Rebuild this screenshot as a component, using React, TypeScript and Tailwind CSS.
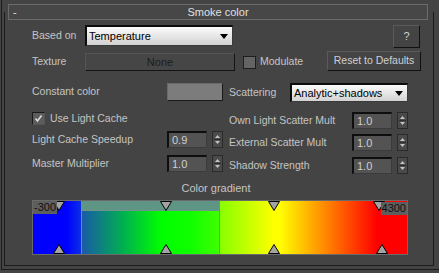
import React from "react";

const font = "font-['Liberation_Sans',Arial,sans-serif]";

function Arrow() {
  return (
    <svg width="8" height="5" viewBox="0 0 8 5">
      <polygon points="0,0 8,0 4,5" fill="#000" />
    </svg>
  );
}

function Dropdown({ text, className }: { text: string; className: string }) {
  return (
    <div
      className={`flex items-center border-t-2 border-l-2 border-t-[#0c0c0c] border-l-[#0c0c0c] border-r border-b border-r-[#3a3a3a] border-b-[#3a3a3a] bg-gradient-to-b from-[#fbfbfb] to-[#d2d2d2] pl-[2px] pr-[4px] text-[11px] text-black ${className}`}
    >
      <span className="flex-1 truncate">{text}</span>
      <Arrow />
    </div>
  );
}

function Spinner() {
  return (
    <div className="ml-[5px] h-[17px] w-[11px] border border-[#2a2a2a] bg-[#4a4a4a]">
      <svg width="9" height="15" viewBox="0 0 9 15">
        <polygon points="4.5,3 7,6 2,6" fill="#c4c4c4" />
        <line x1="1" y1="7.5" x2="8" y2="7.5" stroke="#2e2e2e" />
        <polygon points="2,9 7,9 4.5,12" fill="#c4c4c4" />
      </svg>
    </div>
  );
}

function NumField({ value }: { value: string }) {
  return (
    <div className="flex items-center">
      <div className="flex h-[17px] w-[40px] items-center border-t-2 border-l-2 border-t-[#0e0e0e] border-l-[#0e0e0e] border-r border-b border-r-[#3b3b3b] border-b-[#3b3b3b] bg-[#535353] pl-[3px] text-[11px] text-[#cfcfcf]">
        {value}
      </div>
      <Spinner />
    </div>
  );
}

function TopMarker({ left }: { left: string }) {
  return (
    <svg className={`absolute top-0 ${left}`} width="12" height="10" viewBox="0 0 12 10">
      <polygon points="0.5,0.5 11.5,0.5 6,9.5" fill="#a3a3a3" stroke="#000" strokeWidth="1" />
    </svg>
  );
}

function BottomMarker({ left }: { left: string }) {
  return (
    <svg className={`absolute bottom-0 ${left}`} width="12" height="10" viewBox="0 0 12 10">
      <polygon points="6,0.5 11.5,9.5 0.5,9.5" fill="#a3a3a3" stroke="#000" strokeWidth="1" />
    </svg>
  );
}

export default function App() {
  return (
    <div className={`h-[273px] w-[439px] overflow-hidden whitespace-nowrap bg-[#444444] pl-[1px] text-[10.5px] text-[#c4c4c4] ${font}`}>
      <div className="h-[270px] border-l border-b border-[#1c1c1c] pl-[2px] pt-[12px]">
        <div className="flex h-[254px] w-[430px] flex-col border-l border-r border-b border-[#1c1c1c]">
          {/* rollout header */}
          <div className="-mt-[8px] ml-[3px] grid h-[16px] w-[420px] grid-cols-[20px_1fr_20px] items-center border border-[#6b6b6b] bg-[#474747] text-[11px] text-[#e0e0e0]">
            <span className="pl-[4px] leading-none">-</span>
            <span className="text-center leading-none">Smoke color</span>
            <span />
          </div>

          {/* based on */}
          <div className="mt-[5px] flex items-start pl-[27px]">
            <span className="flex h-[21px] w-[53px] items-center">Based on</span>
            <Dropdown text="Temperature" className="h-[21px] w-[148px]" />
            <div className="ml-auto mr-[13px] flex h-[23px] w-[27px] items-center justify-center border border-t-[#5a5a5a] border-l-[#5a5a5a] border-r-[#111] border-b-[#111] text-[11px] text-[#d0d0d0]">
              ?
            </div>
          </div>

          {/* texture */}
          <div className="mt-[3px] flex items-start pl-[27px]">
            <span className="flex h-[20px] w-[53px] items-center pt-[1px]">Texture</span>
            <div className="mt-[2px] flex h-[18px] w-[150px] items-center justify-center border border-t-[#555] border-l-[#555] border-r-[#151515] border-b-[#151515] bg-[#464646] text-[11px] text-[#1c1c1c]">
              None
            </div>
            <div className="ml-[8px] mt-[5px] h-[13px] w-[13px] border border-[#1e1e1e] bg-[#646464]" />
            <span className="ml-[4px] flex h-[20px] items-center pt-[2px]">Modulate</span>
            <div className="ml-auto mr-[12px] flex h-[20px] w-[94px] items-center justify-center border border-t-[#5a5a5a] border-l-[#5a5a5a] border-r-[#111] border-b-[#111] text-[#d0d0d0]">
              Reset to Defaults
            </div>
          </div>

          {/* two columns */}
          <div className="mt-[12px] flex">
            <div className="ml-[27px] flex w-[192px] flex-col">
              <div className="flex h-[18px] items-center">
                <span className="w-[135px]">Constant color</span>
                <div className="h-[18px] w-[56px] border border-t-[#6a6a6a] border-l-[#6a6a6a] border-r-[#1a1a1a] border-b-[#1a1a1a] bg-[#7c7c7c]" />
              </div>
              <div className="mt-[11px] flex h-[13px] items-center">
                <div className="flex h-[13px] w-[13px] items-center justify-center border border-t-[#1a1a1a] border-l-[#1a1a1a] border-r-[#555] border-b-[#555] bg-[#5c5c5c]">
                  <svg width="9" height="9" viewBox="0 0 9 9">
                    <polyline points="1.5,4.5 3.5,7 7.5,1.5" fill="none" stroke="#dcdcdc" strokeWidth="1.6" />
                  </svg>
                </div>
                <span className="ml-[5px]">Use Light Cache</span>
              </div>
              <div className="mt-[6px] flex h-[17px] items-center">
                <span className="w-[135px]">Light Cache Speedup</span>
                <NumField value="0.9" />
              </div>
              <div className="mt-[7px] flex h-[17px] items-center">
                <span className="w-[135px]">Master Multiplier</span>
                <NumField value="1.0" />
              </div>
            </div>

            <div className="ml-[5px] flex flex-1 flex-col">
              <div className="flex h-[19px] items-center">
                <span className="w-[61px]">Scattering</span>
                <Dropdown text="Analytic+shadows" className="h-[19px] w-[118px]" />
              </div>
              <div className="mt-[10px] flex h-[17px] items-center">
                <span className="w-[123px]">Own Light Scatter Mult</span>
                <NumField value="1.0" />
              </div>
              <div className="mt-[5px] flex h-[17px] items-center">
                <span className="w-[123px]">External Scatter Mult</span>
                <NumField value="1.0" />
              </div>
              <div className="mt-[6px] flex h-[17px] items-center">
                <span className="w-[123px]">Shadow Strength</span>
                <NumField value="1.0" />
              </div>
            </div>
          </div>

          {/* color gradient */}
          <div className="ml-[27px] mt-[8px] h-[13px] w-[376px] pr-[8px] text-center text-[11px] leading-[13px]">
            Color gradient
          </div>
          <div className="relative ml-[27px] mt-[5px] flex h-[55px] w-[376px] border border-[#6a6a6a]">
            <div className="w-[48px] bg-[linear-gradient(to_right,#0000ff_0%,#0000ff_70%,#0a2ee6_100%)]" />
            <div className="flex w-[139px] flex-col border-l border-r border-[#6f948a]">
              <div className="h-[10px] border-b border-[#6f948a] bg-[#5f9585]" />
              <div className="flex-1 bg-[linear-gradient(to_right,#1a5aa8_0%,#00b050_30%,#00ff00_58%,#10ff00_80%,#40ff00_100%)]" />
            </div>
            <div className="flex-1 bg-[linear-gradient(to_right,#88ff00_0%,#ffff00_29%,#ffff00_32%,#ff0000_84%,#ff0000_100%)]" />

            <TopMarker left="left-[20px]" />
            <TopMarker left="left-[127px]" />
            <TopMarker left="left-[235px]" />
            <TopMarker left="left-[340px]" />
            <BottomMarker left="left-[20px]" />
            <BottomMarker left="left-[127px]" />
            <BottomMarker left="left-[235px]" />
            <BottomMarker left="left-[343px]" />

            <span className="absolute left-0 top-0 bg-[#5e5e5e] px-[1px] text-[11px] leading-[13px] text-[#111]">-300</span>
            <span className="absolute right-0 top-[1px] bg-[#5e5e5e] px-[1px] text-[11px] leading-[13px] text-[#111]">4300</span>
          </div>
        </div>
      </div>
    </div>
  );
}
